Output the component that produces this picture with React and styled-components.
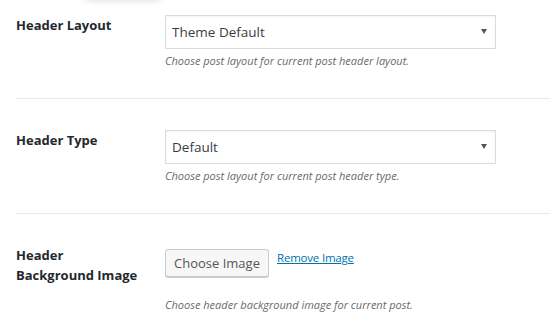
import React from "react";
import styled, { createGlobalStyle } from "styled-components";

const Global = createGlobalStyle`
  html, body { margin: 0; padding: 0; background: #fff; }
  body { font-family: "Open Sans", "Noto Sans", sans-serif; color: #23282d; overflow: hidden; }
`;

const Page = styled.div`
  position: relative;
  width: 550px;
  height: 334px;
  padding-left: 16px;
  box-sizing: border-box;
  overflow: hidden;
`;

const TopShadow = styled.div`
  position: absolute;
  top: -20px;
  left: 84px;
  width: 78px;
  height: 20px;
  border-radius: 6px;
  box-shadow: 0 1px 6px rgba(0, 0, 0, 0.12);
`;

const Row = styled.div`
  display: grid;
  grid-template-columns: 149px 1fr;
  padding-top: ${(p) => p.$top}px;
  padding-bottom: ${(p) => p.$bottom}px;
  border-bottom: ${(p) => (p.$last ? "none" : "1px solid #e8e8e8")};
`;

const Label = styled.div`
  font-size: 13px;
  font-weight: 700;
  line-height: 20px;
  color: #23282d;
`;

const Field = styled.div`
  display: flex;
  flex-direction: column;
  align-items: flex-start;
`;

const SelectWrap = styled.div`
  position: relative;
  width: 331px;
  height: 34px;
`;

const Select = styled.select`
  appearance: none;
  -webkit-appearance: none;
  width: 100%;
  height: 100%;
  box-sizing: border-box;
  margin: 0;
  border: 1px solid #dcdcdc;
  border-radius: 0;
  background: #fff;
  box-shadow: inset 0 1px 2px rgba(0, 0, 0, 0.05);
  padding: 0 24px 0 6px;
  font-family: "Open Sans", "Noto Sans", sans-serif;
  font-size: 13.5px;
  color: #3c3c3c;
  outline: none;
`;

const Arrow = styled.svg`
  position: absolute;
  right: 9px;
  top: 14px;
  width: 6px;
  height: 5px;
  pointer-events: none;
`;

const Desc = styled.p`
  margin: ${(p) => p.$mt}px 0 0;
  font-size: 11px;
  font-style: italic;
  line-height: 16px;
  color: #6a6a6a;
  letter-spacing: 0;
`;

const Actions = styled.div`
  display: flex;
  align-items: flex-start;
  gap: 8px;
  margin-top: 4px;
`;

const Button = styled.button`
  height: 28px;
  width: 104px;
  box-sizing: border-box;
  padding: 0;
  white-space: nowrap;
  border: 1px solid #cccccc;
  border-radius: 3px;
  background: #f7f7f7;
  box-shadow: 0 1px 0 #cccccc;
  font-family: "Open Sans", "Noto Sans", sans-serif;
  font-size: 13px;
  color: #555;
  cursor: pointer;
`;

const Link = styled.a`
  margin-top: 1px;
  font-size: 11.5px;
  line-height: 16px;
  color: #0073aa;
  text-decoration: underline;
  letter-spacing: -0.2px;
`;

function SelectField({ value, options }) {
  return (
    <SelectWrap>
      <Select defaultValue={value}>
        {options.map((o) => (
          <option key={o}>{o}</option>
        ))}
      </Select>
      <Arrow viewBox="0 0 6 5">
        <path d="M0 0 H6 L3 5 Z" fill="#555" />
      </Arrow>
    </SelectWrap>
  );
}

export default function App() {
  return (
    <>
      <Global />
      <Page>
        <TopShadow />
        <Row $top={15} $bottom={29}>
          <Label>Header Layout</Label>
          <Field>
            <SelectField value="Theme Default" options={["Theme Default", "Layout 1", "Layout 2"]} />
            <Desc $mt={4}>Choose post layout for current post header layout.</Desc>
          </Field>
        </Row>
        <Row $top={31} $bottom={29}>
          <Label>Header Type</Label>
          <Field>
            <SelectField value="Default" options={["Default", "Transparent", "Sticky"]} />
            <Desc $mt={4}>Choose post layout for current post header type.</Desc>
          </Field>
        </Row>
        <Row $top={31} $bottom={0} $last>
          <Label>
            Header
            <br />
            Background Image
          </Label>
          <Field>
            <Actions>
              <Button type="button">Choose Image</Button>
              <Link href="#">Remove Image</Link>
            </Actions>
            <Desc $mt={20}>Choose header background image for current post.</Desc>
          </Field>
        </Row>
      </Page>
    </>
  );
}
